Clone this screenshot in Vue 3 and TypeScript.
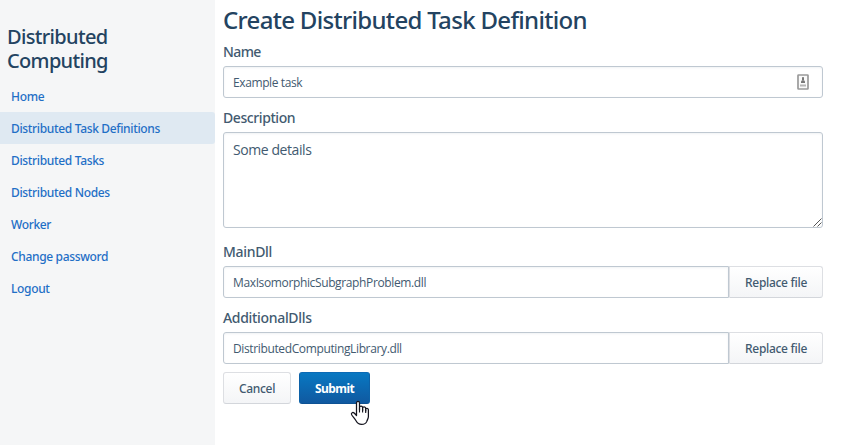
<script setup lang="ts">
import { ref } from 'vue'

const links = ref<string[]>([
  'Home',
  'Distributed Task Definitions',
  'Distributed Tasks',
  'Distributed Nodes',
  'Worker',
  'Change password',
  'Logout',
])
const active = ref('Distributed Task Definitions')
const name = ref('Example task')
const description = ref('Some details')
const files = ref([
  { label: 'MainDll', file: 'MaxIsomorphicSubgraphProblem.dll' },
  { label: 'AdditionalDlls', file: 'DistributedComputingLibrary.dll' },
])
</script>

<template>
  <div class="layout">
    <aside class="sidebar">
      <h2 class="brand">Distributed Computing</h2>
      <nav class="nav">
        <a
          v-for="link in links"
          :key="link"
          class="link"
          :class="{ selected: link === active }"
          @click="active = link"
        >{{ link }}</a>
      </nav>
    </aside>

    <main class="content">
      <h1 class="title">Create Distributed Task Definition</h1>

      <div class="field">
        <label class="label name-label">Name</label>
        <div class="input-wrap">
          <input v-model="name" class="input" type="text" />
          <svg class="autofill" width="12" height="16" viewBox="0 0 12 16">
            <rect x="1" y="1" width="10" height="14" rx="0.5" fill="#fafafa" stroke="#9a9a9a" stroke-width="1.7" />
            <rect x="5" y="3.2" width="2" height="3" fill="#777" />
            <path d="M4 9V7.2L5 6.2h2l1 1V9z" fill="#777" />
            <path d="M3 10.5h6v2H3z" fill="#b5b5b5" />
          </svg>
        </div>
      </div>

      <div class="field">
        <label class="label">Description</label>
        <div class="area-wrap">
          <textarea v-model="description" class="textarea"></textarea>
          <svg class="grip" width="9" height="9" viewBox="0 0 9 9">
            <path d="M0.5 8.5L8.5 0.5M4.5 8.5L8.5 4.5" stroke="#555" stroke-width="1" />
          </svg>
        </div>
      </div>

      <div v-for="item in files" :key="item.label" class="field">
        <label class="label file-label">{{ item.label }}</label>
        <div class="file-row">
          <input class="input file-input" :value="item.file" readonly />
          <button class="button replace" type="button">Replace file</button>
        </div>
      </div>

      <div class="actions">
        <button class="button cancel" type="button">Cancel</button>
        <button class="button submit" type="button">Submit</button>
      </div>
    </main>

    <svg class="pointer" width="20" height="26" viewBox="0 0 20 26">
      <path
        d="M6.5 15.5V3.2C6.5 .8 9.5 .8 9.5 3.2V10V7.4C9.5 5.6 12.6 5.6 12.6 7.6V10.5V8.2C12.6 6.4 15.7 6.6 15.7 8.6V11V9.4C15.7 7.8 18.4 8 18.4 9.8V16.5C18.4 18.6 17.3 19.6 16.8 21.4C15.8 24 13.5 24.4 11.6 24.4C8.6 24.4 7.2 23 6 20.8C4.8 18.6 3.2 17 1.8 15C.6 13.2 2.6 11.8 4.2 13Z"
        fill="#fff"
        stroke="#15151f"
        stroke-width="1.25"
        stroke-linejoin="round"
      />
      <path d="M9.5 8V12.5M12.6 8.5V12.5M15.7 9.5V13" stroke="#15151f" stroke-width="1.1" />
    </svg>
  </div>
</template>

<style>
body {
  margin: 0;
  background: #fff;
}
</style>

<style scoped>
.layout {
  position: relative;
  display: flex;
  width: 842px;
  height: 445px;
  overflow: hidden;
  font-family: "Noto Sans", "Open Sans", sans-serif;
  color: #425a70;
}
.sidebar {
  flex: none;
  box-sizing: border-box;
  width: 215px;
  padding-top: 25px;
  background: #f5f6f7;
}
.brand {
  width: 130px;
  margin: 0;
  padding-left: 7px;
  font-size: 20px;
  font-weight: 500;
  line-height: 24px;
  letter-spacing: -0.66px;
  color: #234361;
}
.nav {
  display: flex;
  flex-direction: column;
  margin-top: 7px;
}
.link {
  height: 32px;
  padding-left: 11px;
  border-radius: 0 3px 3px 0;
  font-size: 12px;
  font-weight: 500;
  line-height: 33px;
  letter-spacing: -0.34px;
  color: #1f6fc6;
  cursor: pointer;
}
.link.selected {
  background: #dfe9f2;
}
.content {
  width: 600px;
  padding-left: 8px;
}
.title {
  margin: 6px 0 4px;
  font-size: 24px;
  font-weight: 500;
  line-height: 28px;
  letter-spacing: -0.68px;
  color: #234361;
}
.field {
  margin-bottom: 6px;
}
.label {
  display: block;
  height: 28px;
  font-size: 14px;
  font-weight: 500;
  line-height: 28px;
  letter-spacing: -0.42px;
}
.name-label {
  letter-spacing: -0.6px;
}
.file-label {
  letter-spacing: -0.32px;
}
.input-wrap,
.area-wrap {
  position: relative;
  display: flex;
}
.input,
.textarea {
  box-sizing: border-box;
  width: 600px;
  margin: 0;
  border: 1px solid #bfc8d1;
  border-radius: 3px;
  outline: none;
  background: #fff;
  box-shadow: inset 0 1px 2px rgba(67, 90, 111, 0.08);
  font-family: "Open Sans", sans-serif;
  color: #425a70;
}
.input {
  height: 32px;
  padding: 1px 9px 0;
  font-size: 12px;
  letter-spacing: -0.4px;
}
.textarea {
  height: 96px;
  padding: 7px 9px;
  resize: none;
  font-size: 14px;
  line-height: 20px;
  letter-spacing: -0.42px;
}
.area-wrap {
  margin-bottom: 10px;
}
.autofill {
  position: absolute;
  top: 8px;
  right: 14px;
}
.grip {
  position: absolute;
  right: 1px;
  bottom: 1px;
}
.file-row {
  display: flex;
}
.file-input {
  flex: none;
  width: 506px;
  border-radius: 3px 0 0 3px;
  letter-spacing: -0.37px;
}
.button {
  box-sizing: border-box;
  height: 32px;
  margin: 0;
  padding: 1px 0 0;
  border: 1px solid #dddfe3;
  border-bottom-color: #d3d6db;
  border-radius: 3px;
  background: linear-gradient(#fff, #f4f5f7);
  font-family: inherit;
  font-size: 12px;
  font-weight: 500;
  letter-spacing: -0.3px;
  color: #425a70;
}
.replace {
  width: 94px;
  border-radius: 0 3px 3px 0;
}
.actions {
  display: flex;
  gap: 8px;
  margin-top: 8px;
}
.cancel {
  width: 68px;
}
.submit {
  width: 71px;
  border-color: #0c6ab5 #0d62a8 #0d5294;
  background: linear-gradient(#0878c2, #1059a0);
  font-weight: 700;
  letter-spacing: -0.55px;
  color: #fff;
}
.pointer {
  position: absolute;
  left: 350px;
  top: 400px;
}
</style>
